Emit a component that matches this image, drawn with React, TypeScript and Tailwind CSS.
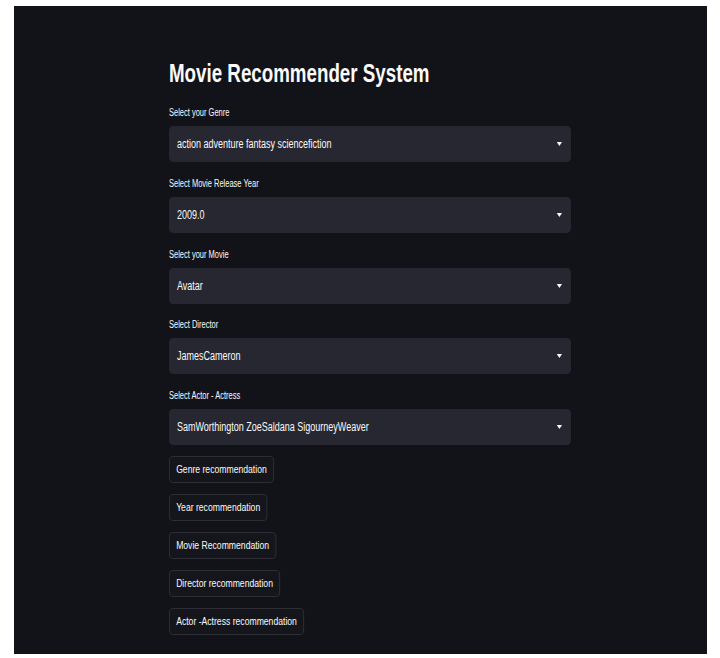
const font = { fontFamily: '"Liberation Sans", Arial, sans-serif' };

const fields = [
  { label: "Select your Genre", value: "action adventure fantasy sciencefiction" },
  { label: "Select Movie Release Year", value: "2009.0" },
  { label: "Select your Movie", value: "Avatar" },
  { label: "Select Director", value: "JamesCameron" },
  { label: "Select Actor - Actress", value: "SamWorthington ZoeSaldana SigourneyWeaver" },
];

const buttons = [
  "Genre recommendation",
  "Year recommendation",
  "Movie Recommendation",
  "Director recommendation",
  "Actor -Actress recommendation",
];

function SelectBox({ label, value }: { label: string; value: string }) {
  return (
    <div className="flex flex-col">
      <label className="mb-[6px] h-[14px] text-[10px] leading-[14px] text-[#fafafa]">{label}</label>
      <div className="flex h-[36px] items-center justify-between rounded-[5px] bg-[#262730] pl-[10.5px] pr-[12.5px]">
        <span className="text-[12px] text-[#fafafa]">{value}</span>
        <svg width="7" height="4" viewBox="0 0 7 4">
          <path d="M0 0h7L3.5 4z" fill="#fafafa" />
        </svg>
      </div>
    </div>
  );
}

export default function App() {
  return (
    <div className="h-[658px] bg-white pl-[14px] pr-[13px] pt-[6px] pb-[4px]" style={font}>
      <div className="h-[648px] bg-[#121319] pl-[155px] pt-[52px]">
        {/* the reference is squeezed sideways, so the whole column is narrowed */}
        <div className="w-[536px] origin-left scale-x-[0.75]">
          <h1 className="h-[30px] text-[25px] font-bold leading-[30px] text-[#fafafa]">
            Movie Recommender System
          </h1>
          <div className="mt-[18px] flex flex-col gap-[14.75px]">
            {fields.map((f) => (
              <SelectBox key={f.label} label={f.label} value={f.value} />
            ))}
          </div>
          <div className="mt-[11px] flex flex-col items-start gap-[11px]">
            {buttons.map((b) => (
              <button
                key={b}
                type="button"
                className="h-[27px] rounded-[5px] border border-[#31323a] bg-[#15161c] px-[8.5px] text-[11.5px] text-[#fafafa]"
              >
                {b}
              </button>
            ))}
          </div>
        </div>
      </div>
    </div>
  );
}
